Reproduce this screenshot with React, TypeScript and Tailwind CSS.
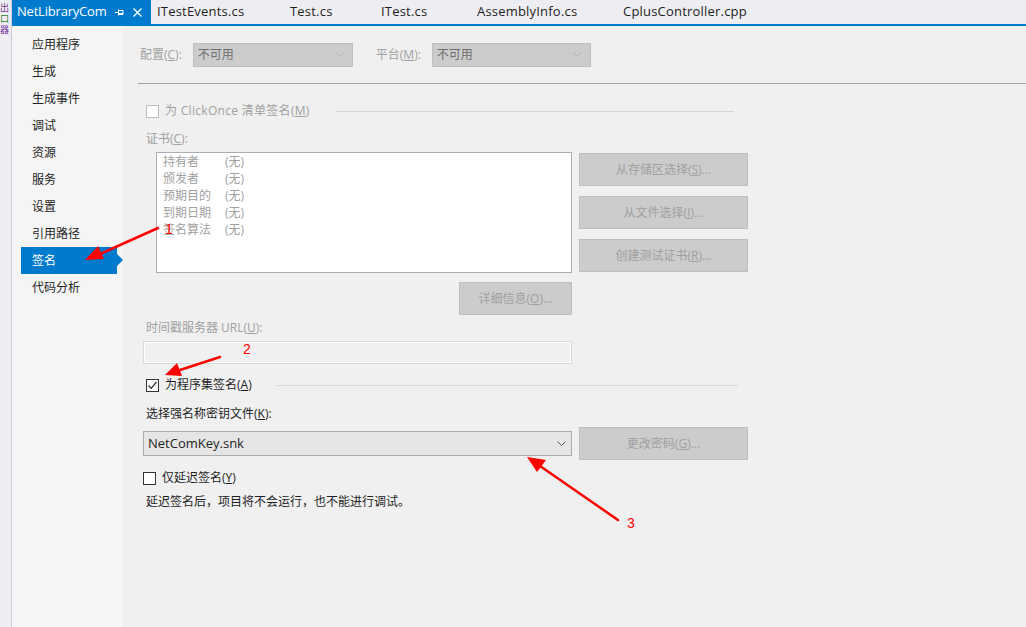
import React from "react";

const ui = "font-['Segoe_UI','Open_Sans','Noto_Sans_CJK_SC',sans-serif]";

const navItems = ["应用程序", "生成", "生成事件", "调试", "资源", "服务", "设置", "引用路径", "签名", "代码分析"];

const tabs = [
  { name: "ITestEvents.cs", w: "w-[133px]" },
  { name: "Test.cs", w: "w-[91px]" },
  { name: "ITest.cs", w: "w-[96px]" },
  { name: "AssemblyInfo.cs", w: "w-[146px]" },
  { name: "CplusController.cpp", w: "w-[160px]" },
];

const certRows = ["持有者", "颁发者", "预期目的", "到期日期", "签名算法"];

const Chevron = ({ color = "#a0a0a0" }: { color?: string }) => (
  <svg width="9" height="6" viewBox="0 0 9 6">
    <path d="M0.5 0.5 L4.5 4.5 L8.5 0.5" fill="none" stroke={color} strokeWidth="1" />
  </svg>
);

const CheckBox = ({ checked, disabled }: { checked?: boolean; disabled?: boolean }) => (
  <div
    className={`w-[13px] h-[13px] border flex items-center justify-center bg-white ${
      disabled ? "border-[#bcbcbc]" : "border-[#333333]"
    }`}
  >
    {checked && (
      <svg width="11" height="11" viewBox="0 0 11 11">
        <path d="M1.5 5.5 L4.2 8.3 L9.5 2" fill="none" stroke="#333" strokeWidth="1.3" />
      </svg>
    )}
  </div>
);

const GrayButton = ({ children, className = "" }: { children: React.ReactNode; className?: string }) => (
  <div
    className={`h-[33px] bg-[#cccccc] border border-[#bfbfbf] flex items-center justify-center text-[12px] text-[#a0a0a0] ${className}`}
  >
    {children}
  </div>
);

export default function App() {
  return (
    <div className={`w-[1026px] h-[627px] overflow-hidden flex bg-[#eeeef2] relative ${ui}`}>
      {/* left tool-window strip */}
      <div className="w-[12px] border-r border-[#ccccd6] flex flex-col pt-[2px] text-[9px] leading-[11px]">
        <span className="text-[#7a3b8f]">出</span>
        <span className="text-[#2e7d32]">口</span>
        <span className="text-[#6a1b9a]">器</span>
      </div>

      <div className="flex-1 flex flex-col">
        {/* tabs */}
        <div className="h-[24px] flex items-stretch text-[13px] text-[#1e1e1e]">
          <div className="w-[139px] bg-[#007acc] text-white flex items-center pl-[5px]">
            <span className="tracking-[-0.2px]">NetLibraryCom</span>
            <svg className="ml-[8px]" width="9" height="9" viewBox="0 0 9 9">
              <path d="M0 4.5 H3 M3.5 1.5 V7.5 M3.5 2.5 H8 V6.5 H3.5 M3.5 5.5 H8" fill="none" stroke="#fff" strokeWidth="1" />
            </svg>
            <svg className="ml-[9px]" width="9" height="9" viewBox="0 0 9 9">
              <path d="M0.5 0.5 L8.5 8.5 M8.5 0.5 L0.5 8.5" stroke="#fff" strokeWidth="1.4" />
            </svg>
          </div>
          {tabs.map((t) => (
            <div key={t.name} className={`${t.w} flex items-center pl-[6px] tracking-[0.2px]`}>
              {t.name}
            </div>
          ))}
        </div>
        <div className="h-[2px] bg-[#007acc]" />

        {/* body */}
        <div className="flex-1 flex">
          {/* side nav */}
          <div className="w-[111px] bg-[#f5f5f5] pt-[5px] text-[12px] text-[#1e1e1e]">
            {navItems.map((n) => {
              const sel = n === "签名";
              return (
                <div key={n} className="h-[27px] flex items-center">
                  <div
                    className={`ml-[9px] w-[96px] h-[27px] flex items-center pl-[11px] relative ${
                      sel ? "bg-[#007acc] text-white" : ""
                    }`}
                  >
                    {n}
                    {sel && (
                      <div className="absolute -right-[6px] top-[7px] w-0 h-0 border-y-[6px] border-y-transparent border-l-[6px] border-l-[#007acc]" />
                    )}
                  </div>
                </div>
              );
            })}
          </div>

          {/* content */}
          <div className="flex-1 bg-[#f0f0f0] text-[12px]">
            <div className="mt-[17px] ml-[17px] h-[24px] flex items-center text-[#a0a0a0]">
              <span>
                配置(<u>C</u>):
              </span>
              <div className="ml-[11px] w-[160px] h-[24px] bg-[#cccccc] border border-[#bfbfbf] flex items-center justify-between pl-[4px] pr-[8px] text-[#6d6d6d]">
                不可用
                <Chevron color="#b0b0b0" />
              </div>
              <span className="ml-[23px]">
                平台(<u>M</u>):
              </span>
              <div className="ml-[11px] w-[159px] h-[24px] bg-[#cccccc] border border-[#bfbfbf] flex items-center justify-between pl-[4px] pr-[8px] text-[#6d6d6d]">
                不可用
                <Chevron color="#b0b0b0" />
              </div>
            </div>
            <div className="mt-[16px] ml-[15px] h-[1px] bg-[#a0a0a0]" />

            <div className="mt-[19px] ml-[23px] w-[588px] h-[16px] flex items-center text-[#a0a0a0]">
              <CheckBox disabled />
              <span className="ml-[6px] tracking-[0.3px]">
                为 ClickOnce 清单签名(<u>M</u>)
              </span>
              <div className="ml-[26px] flex-1 h-[1px] bg-[#d8d8cc]" />
            </div>

            <div className="mt-[12px] ml-[23px] h-[16px] flex items-center text-[#a0a0a0]">
              证书(<u>C</u>):
            </div>

            <div className="mt-[5px] ml-[33px] flex">
              <div className="flex flex-col items-end">
                <div className="w-[416px] h-[121px] bg-white border border-[#abadb3] pl-[6px] text-[#a0a0a0]">
                  {certRows.map((r) => (
                    <div key={r} className="h-[17px] flex items-center">
                      <span className="w-[62px]">{r}</span>
                      <span>(无)</span>
                    </div>
                  ))}
                </div>
                <GrayButton className="mt-[9px] w-[113px]">
                  详细信息(<u>O</u>)...
                </GrayButton>
              </div>
              <div className="ml-[7px] mt-[1px] flex flex-col gap-[10px]">
                <GrayButton className="w-[169px]">
                  从存储区选择(<u>S</u>)...
                </GrayButton>
                <GrayButton className="w-[169px]">
                  从文件选择(<u>I</u>)...
                </GrayButton>
                <GrayButton className="w-[169px]">
                  创建测试证书(<u>R</u>)...
                </GrayButton>
              </div>
            </div>

            <div className="mt-[5px] ml-[23px] h-[16px] flex items-center text-[#a0a0a0]">
              时间戳服务器 URL(<u>U</u>):
            </div>
            <div className="mt-[5px] ml-[20px] w-[429px] h-[23px] border border-[#d9d9d9] bg-[#f0f0f0]">
              <div className="h-full border border-white" />
            </div>

            <div className="mt-[13px] ml-[23px] w-[592px] h-[16px] flex items-center text-[#1e1e1e]">
              <CheckBox checked />
              <span className="ml-[6px]">
                为程序集签名(<u>A</u>)
              </span>
              <div className="ml-[24px] flex-1 h-[1px] bg-[#d8d8cc]" />
            </div>

            <div className="mt-[13px] ml-[23px] h-[16px] flex items-center text-[#1e1e1e]">
              选择强名称密钥文件(<u>K</u>):
            </div>

            <div className="mt-[5px] ml-[20px] h-[33px] flex items-center">
              <div className="w-[429px] h-[25px] bg-[#e5e5e5] border border-[#acacac] flex items-center justify-between pl-[4px] pr-[5px] text-[13px] text-[#1e1e1e]">
                NetComKey.snk
                <Chevron color="#555" />
              </div>
              <GrayButton className="ml-[7px] w-[169px]">
                更改密码(<u>G</u>)...
              </GrayButton>
            </div>

            <div className="mt-[10px] ml-[20px] h-[16px] flex items-center text-[#1e1e1e]">
              <CheckBox />
              <span className="ml-[6px]">
                仅延迟签名(<u>Y</u>)
              </span>
            </div>
            <div className="mt-[8px] ml-[23px] h-[16px] flex items-center text-[#1e1e1e]">
              延迟签名后，项目将不会运行，也不能进行调试。
            </div>
          </div>
        </div>
      </div>

      {/* red annotation arrows */}
      <svg className="absolute left-0 top-0 pointer-events-none" width="1026" height="627">
        <g stroke="#f00" strokeWidth="2.5" fill="#f00" strokeLinecap="round">
          <line x1="158" y1="228" x2="100" y2="254" />
          <polygon points="85,260 98,246 104,259" stroke="none" />
          <line x1="220" y1="357" x2="180" y2="370" />
          <polygon points="165,375 177,363 182,376" stroke="none" />
          <line x1="618" y1="520" x2="540" y2="466" />
          <polygon points="527,457 546,460 537,472" stroke="none" />
        </g>
        <g fill="#f00" fontFamily="Liberation Sans, sans-serif" fontSize="14">
          <text x="165" y="234">1</text>
          <text x="243" y="354">2</text>
          <text x="627" y="528">3</text>
        </g>
      </svg>
    </div>
  );
}
